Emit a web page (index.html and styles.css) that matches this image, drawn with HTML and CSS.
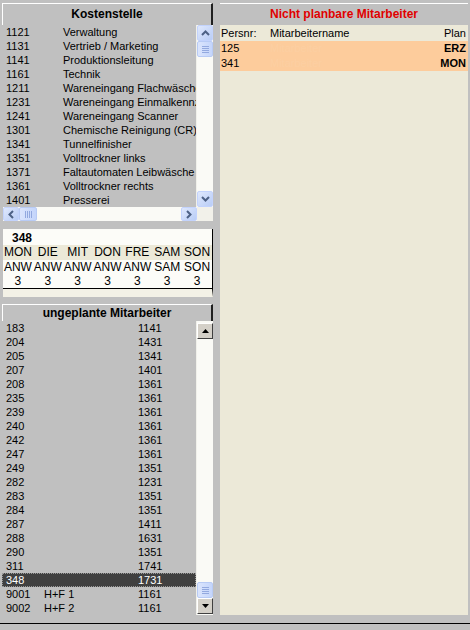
FILE: index.html
```html
<!DOCTYPE html>
<html lang="de">

<head>
    <meta charset="UTF-8">
    <title>Personalplanung</title>
    <link rel="stylesheet" href="styles.css">
</head>

<body>
    <div class="screen">
        <div class="left">
            <div class="caption">Kostenstelle</div>
            <div class="listbox cost">
                <div class="list-main">
                    <div class="rows">
                        <div class="row"><span class="c1">1121</span><span>Verwaltung</span></div>
                        <div class="row"><span class="c1">1131</span><span>Vertrieb / Marketing</span></div>
                        <div class="row"><span class="c1">1141</span><span>Produktionsleitung</span></div>
                        <div class="row"><span class="c1">1161</span><span>Technik</span></div>
                        <div class="row"><span class="c1">1211</span><span>Wareneingang Flachwäsche</span></div>
                        <div class="row"><span class="c1">1231</span><span>Wareneingang Einmalkennz</span></div>
                        <div class="row"><span class="c1">1241</span><span>Wareneingang Scanner</span></div>
                        <div class="row"><span class="c1">1301</span><span>Chemische Reinigung (CR)</span></div>
                        <div class="row"><span class="c1">1341</span><span>Tunnelfinisher</span></div>
                        <div class="row"><span class="c1">1351</span><span>Volltrockner links</span></div>
                        <div class="row"><span class="c1">1371</span><span>Faltautomaten Leibwäsche</span></div>
                        <div class="row"><span class="c1">1361</span><span>Volltrockner rechts</span></div>
                        <div class="row"><span class="c1">1401</span><span>Presserei</span></div>
                    </div>
                    <!-- vertical scrollbar, xp style -->
                    <div class="vscroll">
                        <div class="xp-btn">
                            <svg width="9" height="6" viewBox="0 0 9 6"><path d="M1 5 L4.5 1.5 L8 5" fill="none" stroke="#4d6185" stroke-width="2"/></svg>
                        </div>
                        <div class="xp-thumb tall"><span></span><span></span><span></span><span></span></div>
                        <div class="fill"></div>
                        <div class="xp-btn">
                            <svg width="9" height="6" viewBox="0 0 9 6"><path d="M1 1 L4.5 4.5 L8 1" fill="none" stroke="#4d6185" stroke-width="2"/></svg>
                        </div>
                    </div>
                </div>
                <!-- horizontal scrollbar -->
                <div class="hscroll">
                    <div class="xp-btn">
                        <svg width="6" height="9" viewBox="0 0 6 9"><path d="M5 1 L1.5 4.5 L5 8" fill="none" stroke="#4d6185" stroke-width="2"/></svg>
                    </div>
                    <div class="xp-thumb wide"><span></span><span></span><span></span><span></span></div>
                    <div class="fill"></div>
                    <div class="xp-btn">
                        <svg width="6" height="9" viewBox="0 0 6 9"><path d="M1 1 L4.5 4.5 L1 8" fill="none" stroke="#4d6185" stroke-width="2"/></svg>
                    </div>
                    <div class="corner"></div>
                </div>
            </div>

            <div class="week">
                <div class="week-nr">348</div>
                <div class="week-grid days">
                    <span>MON</span><span>DIE</span><span>MIT</span><span>DON</span><span>FRE</span><span>SAM</span><span>SON</span>
                </div>
                <div class="week-grid">
                    <span>ANW</span><span>ANW</span><span>ANW</span><span>ANW</span><span>ANW</span><span>SAM</span><span>SON</span>
                </div>
                <div class="week-grid last">
                    <span>3</span><span>3</span><span>3</span><span>3</span><span>3</span><span>3</span><span>3</span>
                </div>
            </div>

            <div class="caption small">ungeplante Mitarbeiter</div>
            <div class="listbox staff">
                <div class="rows">
                    <div class="row"><span class="n1">183</span><span class="n2"></span><span>1141</span></div>
                    <div class="row"><span class="n1">204</span><span class="n2"></span><span>1431</span></div>
                    <div class="row"><span class="n1">205</span><span class="n2"></span><span>1341</span></div>
                    <div class="row"><span class="n1">207</span><span class="n2"></span><span>1401</span></div>
                    <div class="row"><span class="n1">208</span><span class="n2"></span><span>1361</span></div>
                    <div class="row"><span class="n1">235</span><span class="n2"></span><span>1361</span></div>
                    <div class="row"><span class="n1">239</span><span class="n2"></span><span>1361</span></div>
                    <div class="row"><span class="n1">240</span><span class="n2"></span><span>1361</span></div>
                    <div class="row"><span class="n1">242</span><span class="n2"></span><span>1361</span></div>
                    <div class="row"><span class="n1">247</span><span class="n2"></span><span>1361</span></div>
                    <div class="row"><span class="n1">249</span><span class="n2"></span><span>1351</span></div>
                    <div class="row"><span class="n1">282</span><span class="n2"></span><span>1231</span></div>
                    <div class="row"><span class="n1">283</span><span class="n2"></span><span>1351</span></div>
                    <div class="row"><span class="n1">284</span><span class="n2"></span><span>1351</span></div>
                    <div class="row"><span class="n1">287</span><span class="n2"></span><span>1411</span></div>
                    <div class="row"><span class="n1">288</span><span class="n2"></span><span>1631</span></div>
                    <div class="row"><span class="n1">290</span><span class="n2"></span><span>1351</span></div>
                    <div class="row"><span class="n1">311</span><span class="n2"></span><span>1741</span></div>
                    <div class="row selected"><span class="n1">348</span><span class="n2"></span><span>1731</span></div>
                    <div class="row"><span class="n1">9001</span><span class="n2">H+F 1</span><span>1161</span></div>
                    <div class="row"><span class="n1">9002</span><span class="n2">H+F 2</span><span>1161</span></div>
                </div>
                <!-- classic arrows with an xp thumb -->
                <div class="vscroll">
                    <div class="classic-btn">
                        <svg width="7" height="4" viewBox="0 0 7 4"><path d="M0 4 L3.5 0 L7 4 Z" fill="#000"/></svg>
                    </div>
                    <div class="fill"></div>
                    <div class="xp-thumb low"><span></span><span></span><span></span><span></span></div>
                    <div class="classic-btn">
                        <svg width="7" height="4" viewBox="0 0 7 4"><path d="M0 0 L7 0 L3.5 4 Z" fill="#000"/></svg>
                    </div>
                </div>
            </div>
        </div>

        <div class="right">
            <div class="caption red">Nicht planbare Mitarbeiter</div>
            <div class="blocked">
                <div class="brow head"><span class="p1">Persnr:</span><span class="p2">Mitarbeitername</span><span class="p3">Plan</span></div>
                <div class="brow hit"><span class="p1">125</span><span class="p2 hidden-name">Mitarbeiter</span><span class="p3 bold">ERZ</span></div>
                <div class="brow hit"><span class="p1">341</span><span class="p2 hidden-name">Mitarbeiter</span><span class="p3 bold">MON</span></div>
            </div>
        </div>
    </div>
    <div class="statusline"></div>
</body>

</html>
```

FILE: styles.css
```css
body {
    margin: 0;
    background-color: #c0c0c0;
    font-family: "Liberation Sans", Arial, sans-serif;
    font-size: 11px;
    color: #000;
    width: 470px;
    height: 630px;
    overflow: hidden;
}

.screen {
    display: flex;
    height: 615px;
    padding-top: 3px;
    box-sizing: border-box;
}

.left {
    width: 211px;
    margin-left: 2px;
    display: flex;
    flex-direction: column;
}

.right {
    width: 248px;
    margin-left: 7px;
    display: flex;
    flex-direction: column;
}

.caption {
    height: 22px;
    box-sizing: border-box;
    border-top: 1px solid #fff;
    border-left: 1px solid #fff;
    border-right: 2px solid #202020;
    background-color: #c0c0c0;
    font-weight: bold;
    font-size: 12px;
    text-align: center;
    line-height: 20px;
}

.caption.small {
    height: 17px;
    line-height: 16px;
    margin-top: 7px;
}

.caption.red {
    color: #e00000;
    border-right: none;
    border-left: none;
    border-top: 1px solid #fff;
}

/* list boxes */
.listbox {
    background-color: #c0c0c0;
}

.list-main {
    display: flex;
    height: 182px;
}

.rows {
    flex: 1;
    overflow: hidden;
}

.row {
    height: 14px;
    line-height: 14px;
    display: flex;
    white-space: nowrap;
    padding-left: 4px;
}

.cost .c1 {
    width: 57px;
    flex-shrink: 0;
}

.staff {
    display: flex;
    height: 294px;
}

.staff .n1 {
    width: 38px;
}

.staff .n2 {
    width: 94px;
}

.row.selected {
    background-color: #404040;
    color: #fff;
    outline: 1px dotted #999;
    outline-offset: -1px;
}

.vscroll {
    width: 16px;
    display: flex;
    flex-direction: column;
    background-color: #fafaf6;
    border-left: 1px solid #f0f0ea;
}

.vscroll .fill,
.hscroll .fill {
    flex: 1;
}

.hscroll {
    display: flex;
    height: 14px;
    background-color: #fafaf6;
    margin-left: 1px;
}

.hscroll .corner {
    width: 16px;
    background-color: #f2f1ea;
}

.xp-btn {
    width: 16px;
    height: 16px;
    box-sizing: border-box;
    border: 1px solid #c3d3fd;
    border-radius: 2px;
    background: linear-gradient(135deg, #dfe8fd, #b9cdf6);
    display: flex;
    align-items: center;
    justify-content: center;
}

.hscroll .xp-btn {
    height: 14px;
}

.xp-thumb {
    box-sizing: border-box;
    border: 1px solid #b8cbf5;
    border-radius: 2px;
    background: linear-gradient(90deg, #dbe5fd, #c4d5fb);
    display: flex;
    align-items: center;
    justify-content: center;
    gap: 1px;
}

.xp-thumb span {
    background-color: #93a9df;
}

.xp-thumb.tall,
.xp-thumb.low {
    height: 16px;
    flex-direction: column;
}

.xp-thumb.tall span,
.xp-thumb.low span {
    width: 7px;
    height: 1px;
}

.xp-thumb.wide {
    width: 18px;
    height: 14px;
}

.xp-thumb.wide span {
    width: 1px;
    height: 7px;
}

.classic-btn {
    width: 16px;
    height: 16px;
    box-sizing: border-box;
    background-color: #d4d0c8;
    border-top: 1px solid #fff;
    border-left: 1px solid #fff;
    border-right: 1px solid #404040;
    border-bottom: 1px solid #404040;
    display: flex;
    align-items: center;
    justify-content: center;
}

.staff .vscroll {
    padding-top: 2px;
    padding-bottom: 1px;
}

/* week summary box */
.week {
    margin-top: 8px;
    margin-left: 1px;
    height: 68px;
    box-sizing: border-box;
    background-color: #fcfcf8;
    border-right: 1px solid #000;
    border-bottom: 8px solid #f3f1e6;
    font-size: 12px;
    padding-top: 2px;
}

.week-nr {
    font-weight: bold;
    padding-left: 9px;
    height: 14px;
    line-height: 14px;
}

.week-grid {
    display: grid;
    grid-template-columns: repeat(7, 1fr);
    height: 15px;
    line-height: 15px;
    text-align: center;
}

.week-grid.days {
    background-color: #ece9d8;
}

.week-grid.last {
    height: 14px;
    line-height: 13px;
    box-sizing: border-box;
    border-bottom: 1px solid #000;
}

/* blocked employees, right side */
.blocked {
    flex: 1;
    background-color: #ece9d8;
    padding-top: 1px;
}

.brow {
    display: flex;
    height: 16px;
    line-height: 16px;
    padding-left: 1px;
    padding-right: 2px;
    white-space: nowrap;
}

.brow.head {
    height: 15px;
    line-height: 15px;
}

.brow.hit {
    background-color: #fdcc9c;
    height: 15px;
    line-height: 15px;
}

.p1 {
    width: 49px;
}

.p2 {
    flex: 1;
}

.p3 {
    text-align: right;
}

.hidden-name {
    color: #fccfa2;
}

.bold {
    font-weight: bold;
}

.statusline {
    height: 8px;
    border-bottom: 1px solid #000;
}
```
